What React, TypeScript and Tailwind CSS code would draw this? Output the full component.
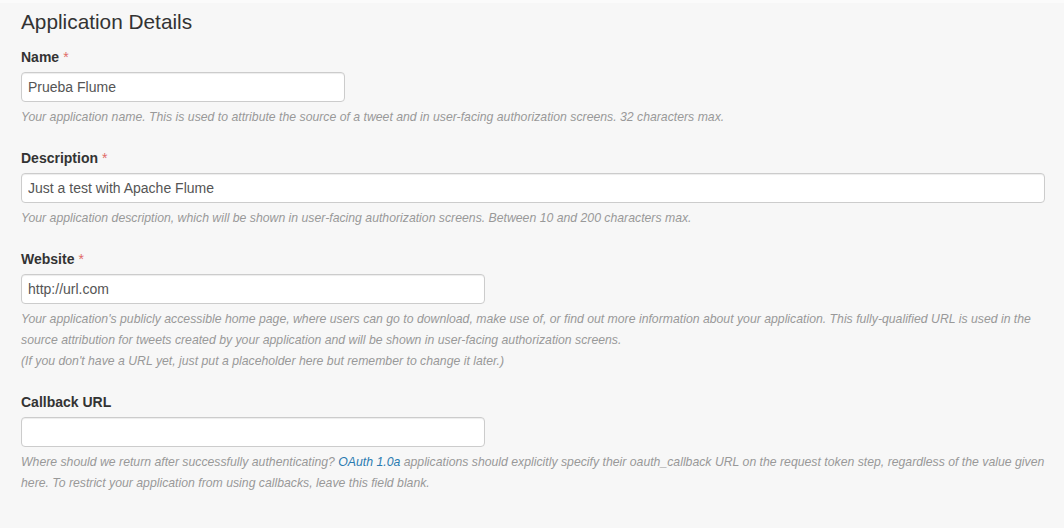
import React from 'react';

interface FieldProps {
  label: string;
  required?: boolean;
  value: string;
  width: string;
  children: React.ReactNode;
}

function Field({ label, required, value, width, children }: FieldProps) {
  return (
    <div className="mb-[20px]">
      <div className="text-[14px] leading-[20px] font-bold text-[#333]">
        {label}
        {required && <span className="font-normal text-[#e06b67] ml-[4px]">*</span>}
      </div>
      <input
        readOnly
        value={value}
        className={`mt-[5px] block ${width} h-[30px] bg-white border border-[#ccc] rounded-[4px] px-[6px] text-[14px] text-[#555] shadow-[inset_0_1px_1px_rgba(0,0,0,0.075)] outline-none`}
      />
      <div className="mt-[5px] text-[12.25px] leading-[21px] italic text-[#999]">{children}</div>
    </div>
  );
}

export default function App() {
  return (
    <div
      className="w-[1064px] h-[528px] bg-[#f7f7f7] border-t-[3px] border-[#fbfbfb] overflow-hidden"
      style={{ fontFamily: '"Liberation Sans", Arial, sans-serif' }}
    >
      <div className="pl-[21px] pr-[19px]">
        <h1 className="mt-[7px] text-[20.8px] leading-[24px] text-[#333]">Application Details</h1>
        <div className="mt-[13px]">
          <Field label="Name" required value="Prueba Flume" width="w-[324px]">
            Your application name. This is used to attribute the source of a tweet and in user-facing authorization screens. 32 characters max.
          </Field>
          <Field label="Description" required value="Just a test with Apache Flume" width="w-full">
            Your application description, which will be shown in user-facing authorization screens. Between 10 and 200 characters max.
          </Field>
          <Field label="Website" required value="http://url.com" width="w-[464px]">
            Your application's publicly accessible home page, where users can go to download, make use of, or find out more information about your application. This fully-qualified URL is used in the source attribution for tweets created by your application and will be shown in user-facing authorization screens.
            <br />
            (If you don't have a URL yet, just put a placeholder here but remember to change it later.)
          </Field>
          <Field label="Callback URL" value="" width="w-[464px]">
            Where should we return after successfully authenticating? <a className="text-[#2a7ab0]">OAuth 1.0a</a> applications should explicitly specify their oauth_callback URL on the request token step, regardless of the value given here. To restrict your application from using callbacks, leave this field blank.
          </Field>
        </div>
      </div>
    </div>
  );
}
